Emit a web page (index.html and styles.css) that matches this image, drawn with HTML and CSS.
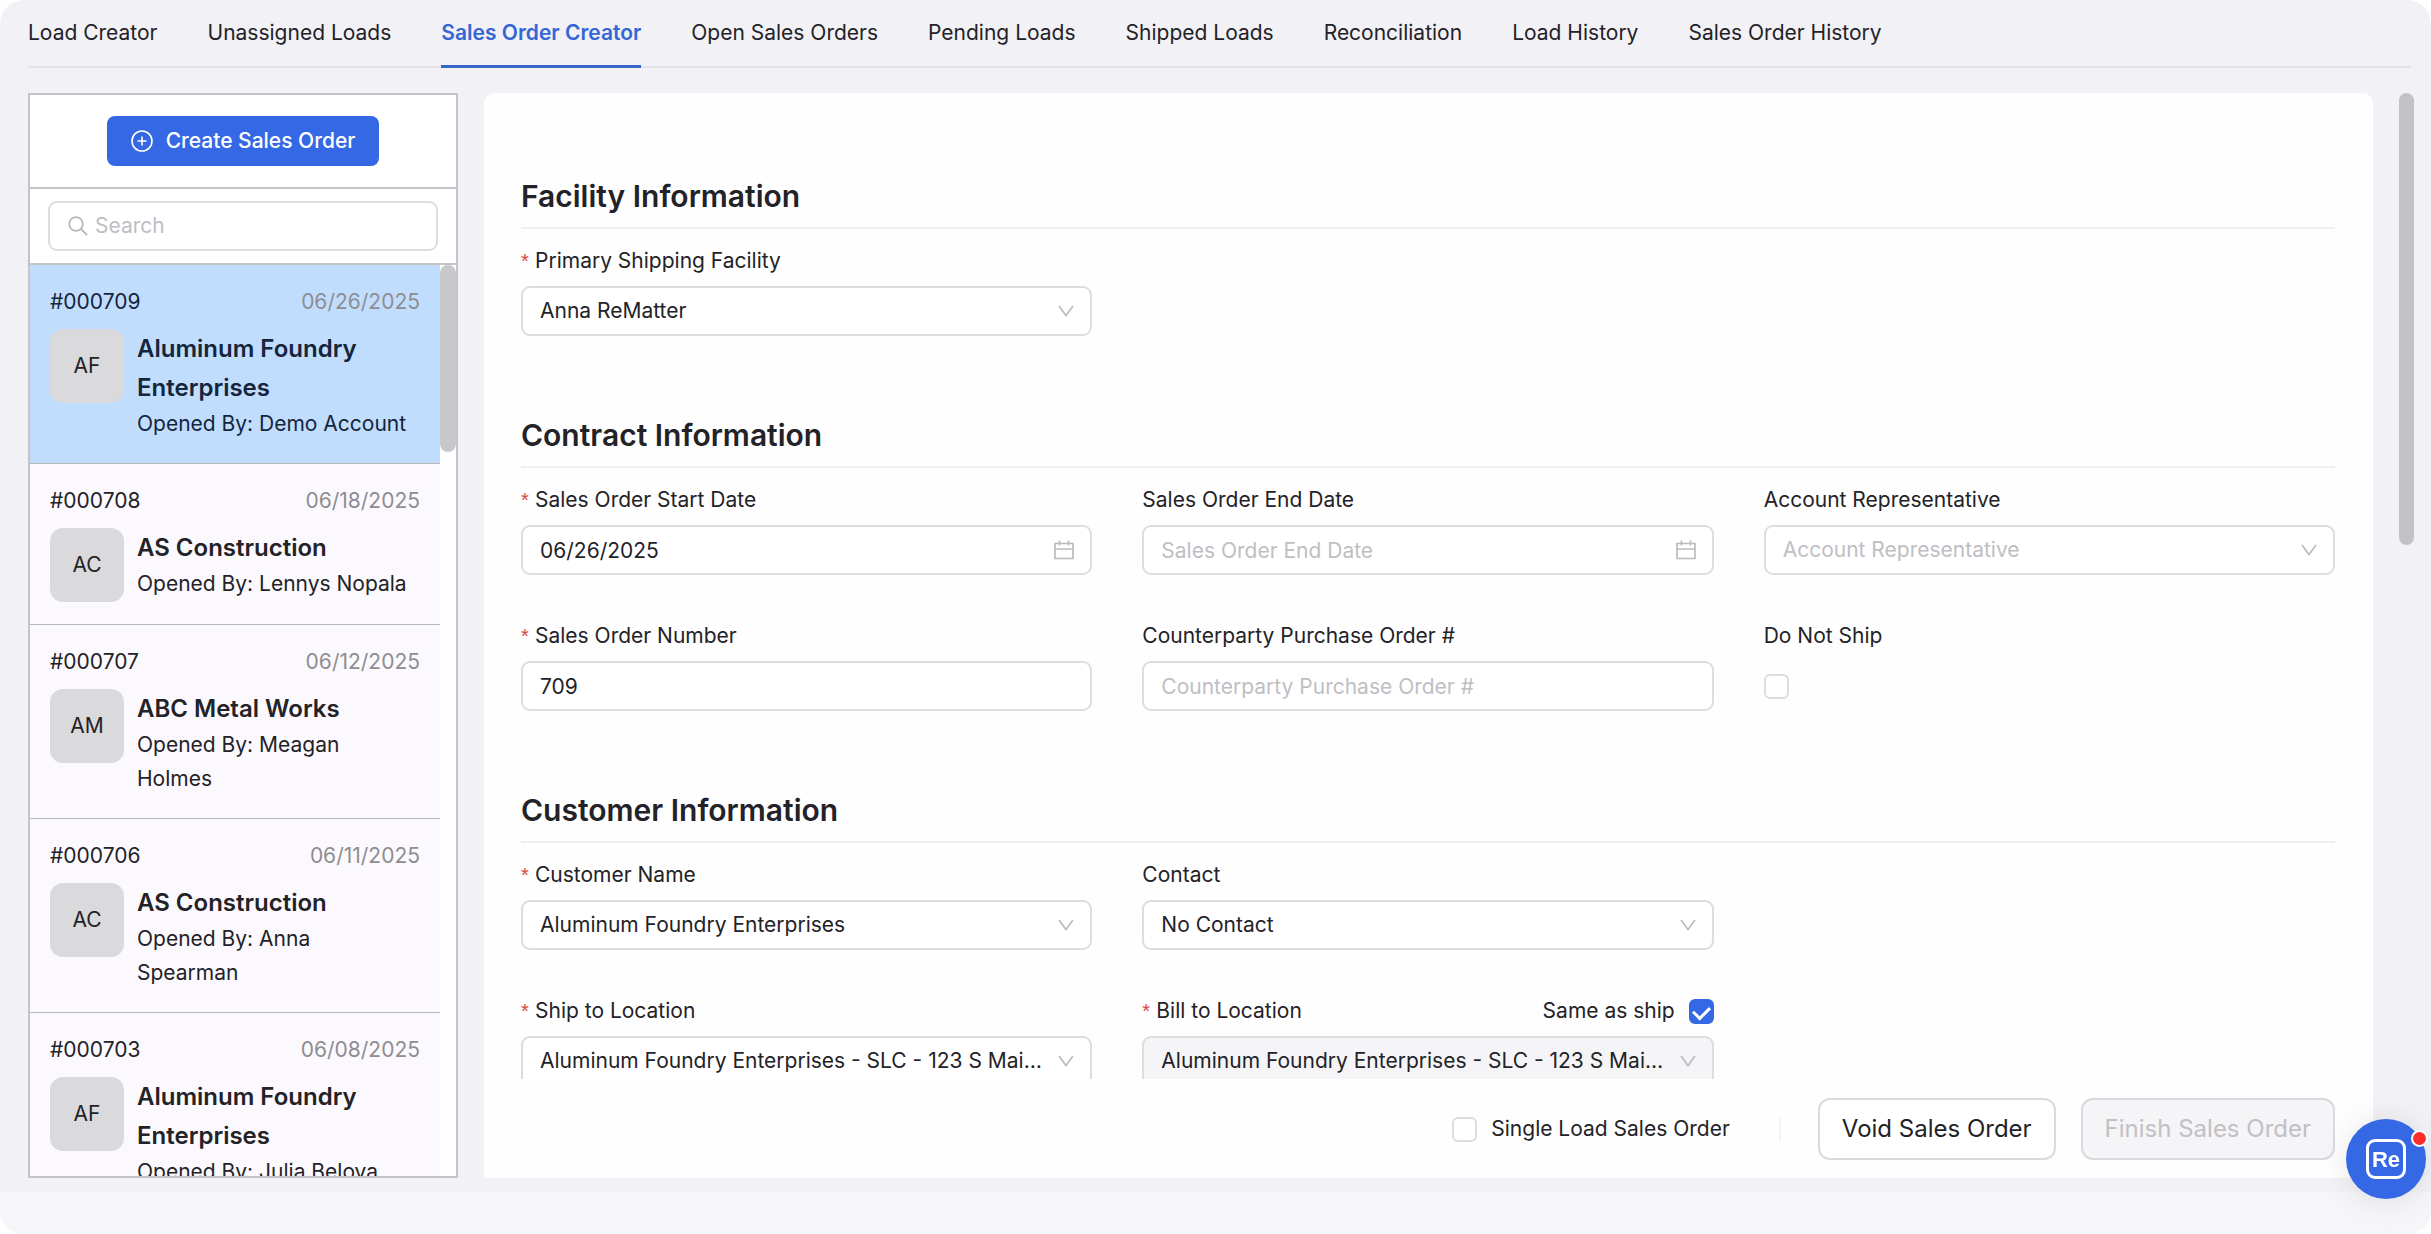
FILE: index.html
```html
<!DOCTYPE html>
<html lang="en">
<head>
  <meta charset="UTF-8">
  <title>Sales Order Creator</title>
  <link rel="stylesheet" href="styles.css">
</head>
<body>
  <div class="app">
    <nav class="tabs">
      <a href="#">Load Creator</a>
      <a href="#">Unassigned Loads</a>
      <a href="#" class="active">Sales Order Creator</a>
      <a href="#">Open Sales Orders</a>
      <a href="#">Pending Loads</a>
      <a href="#">Shipped Loads</a>
      <a href="#">Reconciliation</a>
      <a href="#">Load History</a>
      <a href="#">Sales Order History</a>
    </nav>

    <div class="content">
      <aside class="sidebar">
        <div class="create">
          <button type="button" class="create-button">
            <svg width="22" height="22" viewBox="0 0 22 22" fill="none" stroke="currentColor" stroke-width="1.6">
              <circle cx="11" cy="11" r="10"/>
              <path d="M11 6.5v9M6.5 11h9"/>
            </svg>
            Create Sales Order
          </button>
        </div>

        <div class="search">
          <label class="search-box">
            <svg width="20" height="20" viewBox="0 0 20 20" fill="none" stroke="currentColor" stroke-width="1.8">
              <circle cx="8" cy="8" r="6.8"/>
              <path d="M13 13l6 6"/>
            </svg>
            <input type="text" placeholder="Search" aria-label="Search">
          </label>
        </div>

        <div class="orders">
          <ul class="order-list">
            <li class="order selected">
              <div class="order-top"><span>#000709</span><span class="date">06/26/2025</span></div>
              <div class="order-body">
                <div class="avatar">AF</div>
                <div>
                  <div class="name">Aluminum Foundry Enterprises</div>
                  <div>Opened By: Demo Account</div>
                </div>
              </div>
            </li>
            <li class="order">
              <div class="order-top"><span>#000708</span><span class="date">06/18/2025</span></div>
              <div class="order-body">
                <div class="avatar">AC</div>
                <div>
                  <div class="name">AS Construction</div>
                  <div>Opened By: Lennys Nopala</div>
                </div>
              </div>
            </li>
            <li class="order">
              <div class="order-top"><span>#000707</span><span class="date">06/12/2025</span></div>
              <div class="order-body">
                <div class="avatar">AM</div>
                <div>
                  <div class="name">ABC Metal Works</div>
                  <div>Opened By: Meagan Holmes</div>
                </div>
              </div>
            </li>
            <li class="order">
              <div class="order-top"><span>#000706</span><span class="date">06/11/2025</span></div>
              <div class="order-body">
                <div class="avatar">AC</div>
                <div>
                  <div class="name">AS Construction</div>
                  <div>Opened By: Anna Spearman</div>
                </div>
              </div>
            </li>
            <li class="order">
              <div class="order-top"><span>#000703</span><span class="date">06/08/2025</span></div>
              <div class="order-body">
                <div class="avatar">AF</div>
                <div>
                  <div class="name">Aluminum Foundry Enterprises</div>
                  <div>Opened By: Julia Belova</div>
                </div>
              </div>
            </li>
          </ul>
          <div class="list-scroll"><div class="list-thumb"></div></div>
        </div>
      </aside>

      <form class="card">
        <div class="card-scroll">
          <section>
            <h2>Facility Information</h2>
            <div class="grid">
              <div class="field">
                <label class="required" for="facility">Primary Shipping Facility</label>
                <div class="control">
                  <select id="facility"><option>Anna ReMatter</option></select>
                  <svg class="arrow" width="16" height="12" viewBox="0 0 16 12"><path d="M1 1l7 9.5L15 1"/></svg>
                </div>
              </div>
            </div>
          </section>

          <section>
            <h2>Contract Information</h2>
            <div class="grid">
              <div class="field">
                <label class="required" for="startDate">Sales Order Start Date</label>
                <div class="control">
                  <input type="text" id="startDate" value="06/26/2025">
                  <svg class="calendar" width="20" height="20" viewBox="0 0 20 20"><path d="M1 3.5h18v15H1zM1 9h18M5.5 0.5v5M14.5 0.5v5"/></svg>
                </div>
              </div>
              <div class="field">
                <label for="endDate">Sales Order End Date</label>
                <div class="control">
                  <input type="text" id="endDate" placeholder="Sales Order End Date">
                  <svg class="calendar" width="20" height="20" viewBox="0 0 20 20"><path d="M1 3.5h18v15H1zM1 9h18M5.5 0.5v5M14.5 0.5v5"/></svg>
                </div>
              </div>
              <div class="field">
                <label for="rep">Account Representative</label>
                <div class="control">
                  <select id="rep" class="empty"><option>Account Representative</option></select>
                  <svg class="arrow" width="16" height="12" viewBox="0 0 16 12"><path d="M1 1l7 9.5L15 1"/></svg>
                </div>
              </div>
              <div class="field">
                <label class="required" for="orderNumber">Sales Order Number</label>
                <div class="control"><input type="text" id="orderNumber" value="709"></div>
              </div>
              <div class="field">
                <label for="purchaseOrder">Counterparty Purchase Order #</label>
                <div class="control"><input type="text" id="purchaseOrder" placeholder="Counterparty Purchase Order #"></div>
              </div>
              <div class="field">
                <label for="doNotShip">Do Not Ship</label>
                <div class="control"><input type="checkbox" id="doNotShip"></div>
              </div>
            </div>
          </section>

          <section>
            <h2>Customer Information</h2>
            <div class="grid">
              <div class="field">
                <label class="required" for="customer">Customer Name</label>
                <div class="control">
                  <select id="customer"><option>Aluminum Foundry Enterprises</option></select>
                  <svg class="arrow" width="16" height="12" viewBox="0 0 16 12"><path d="M1 1l7 9.5L15 1"/></svg>
                </div>
              </div>
              <div class="field">
                <label for="contact">Contact</label>
                <div class="control">
                  <select id="contact"><option>No Contact</option></select>
                  <svg class="arrow" width="16" height="12" viewBox="0 0 16 12"><path d="M1 1l7 9.5L15 1"/></svg>
                </div>
              </div>
              <div class="field first">
                <label class="required" for="shipTo">Ship to Location</label>
                <div class="control">
                  <select id="shipTo"><option>Aluminum Foundry Enterprises - SLC - 123 S Main Street</option></select>
                  <svg class="arrow" width="16" height="12" viewBox="0 0 16 12"><path d="M1 1l7 9.5L15 1"/></svg>
                </div>
              </div>
              <div class="field">
                <div class="label-row">
                  <label class="required" for="billTo">Bill to Location</label>
                  <label class="check">Same as ship <input type="checkbox" checked></label>
                </div>
                <div class="control">
                  <select id="billTo" disabled><option>Aluminum Foundry Enterprises - SLC - 123 S Main Street</option></select>
                  <svg class="arrow" width="16" height="12" viewBox="0 0 16 12"><path d="M1 1l7 9.5L15 1"/></svg>
                </div>
              </div>
            </div>
          </section>
        </div>

        <div class="card-footer">
          <label class="check"><input type="checkbox"> Single Load Sales Order</label>
          <div class="divider"></div>
          <button type="button">Void Sales Order</button>
          <button type="button" disabled>Finish Sales Order</button>
        </div>
      </form>

      <div class="page-scroll"><div class="page-thumb"></div></div>
    </div>

    <div class="bottom-strip"></div>
  </div>

  <button type="button" class="chat" aria-label="Help">
    <span class="chat-logo">Re</span>
    <span class="chat-dot"></span>
  </button>
</body>
</html>
```
FILE: styles.css
```css
* {
  box-sizing: border-box;
}

body {
  margin: 0;
  background: #ffffff;
  color: #232227;
  font-family: Inter, "Liberation Sans", sans-serif;
  font-size: 21px;
  line-height: 34px;
}

input,
select,
button {
  font: inherit;
  color: inherit;
}

.app {
  display: flex;
  flex-direction: column;
  height: 100vh;
  background: #f2f1f6;
  border-radius: 24px;
  overflow: hidden;
}

/* Tabs */
.tabs {
  display: flex;
  gap: 50px;
  margin: 0 20px 0 28px;
  padding-top: 16px;
  border-bottom: 2px solid #e3e2e8;
}

.tabs a {
  color: inherit;
  text-decoration: none;
  padding-bottom: 15px;
  margin-bottom: -2px;
  border-bottom: 3px solid transparent;
  white-space: nowrap;
}

.tabs a.active {
  color: #3566d6;
  font-weight: 600;
  border-bottom-color: #3566c8;
}

.content {
  flex: 1;
  min-height: 0;
  display: flex;
  padding: 25px 17px 14px 28px;
}

/* Sidebar */
.sidebar {
  width: 430px;
  flex-shrink: 0;
  display: flex;
  flex-direction: column;
  background: #ffffff;
  border: 2px solid #c4c3c8;
  margin-right: 26px;
}

.create {
  display: flex;
  justify-content: center;
  padding: 21px 0;
  border-bottom: 2px solid #c4c3c8;
}

.create-button {
  display: flex;
  align-items: center;
  gap: 13px;
  height: 50px;
  padding: 0 24px;
  border: none;
  border-radius: 8px;
  background: #3568e4;
  color: #ffffff;
  font-weight: 500;
  white-space: nowrap;
}

.search {
  padding: 12px 18px;
  border-bottom: 2px solid #c4c3c8;
}

.search-box {
  display: flex;
  align-items: center;
  gap: 7px;
  height: 50px;
  padding: 0 18px;
  border: 2px solid #dddce0;
  border-radius: 9px;
  color: #b9b8bd;
}

.search-box input {
  flex: 1;
  min-width: 0;
  border: none;
  outline: none;
  padding: 0;
  background: none;
}

::placeholder {
  color: #bfbec3;
  opacity: 1;
}

.orders {
  flex: 1;
  min-height: 0;
  display: flex;
}

.order-list {
  flex: 1;
  margin: 0;
  padding: 0;
  list-style: none;
  overflow: hidden;
}

.order {
  padding: 20px 20px 22px;
  background: #fbf9fd;
  border-bottom: 1px solid #b9b8bd;
}

.order.selected {
  background: #c1ddfe;
  color: #14253c;
}

.order-top {
  display: flex;
  justify-content: space-between;
  margin-bottom: 10px;
}

.date {
  color: #8e8d92;
}

.order-body {
  display: flex;
  gap: 13px;
  padding-right: 8px;
}

.avatar {
  width: 74px;
  height: 74px;
  flex-shrink: 0;
  display: flex;
  align-items: center;
  justify-content: center;
  background: #dad9dc;
  border-radius: 13px;
  color: #232227;
}

.name {
  font-size: 24px;
  font-weight: 600;
  line-height: 39px;
}

.list-scroll {
  width: 16px;
}

.list-thumb {
  height: 187px;
  background: #c8c7ca;
  border-radius: 8px;
}

/* Form card */
.card {
  flex: 1;
  min-width: 0;
  display: flex;
  flex-direction: column;
  background: #fefefe;
  border-radius: 10px 10px 0 0;
}

.card-scroll {
  flex: 1;
  min-height: 0;
  overflow: hidden;
  padding: 82px 38px 0 37px;
}

section {
  margin-bottom: 78px;
}

h2 {
  margin: 0 0 15px;
  padding-bottom: 9px;
  border-bottom: 2px solid #f0eff2;
  font-size: 30px;
  font-weight: 600;
  line-height: 43px;
}

.grid {
  display: grid;
  grid-template-columns: repeat(3, 1fr);
  gap: 44px 50px;
}

.field {
  min-width: 0;
}

.field.first {
  grid-column: 1;
}

.field > label {
  display: block;
}

.label-row {
  display: flex;
  justify-content: space-between;
}

.required::before {
  content: "*";
  display: inline-block;
  width: 14px;
  color: #d9463c;
  font-family: "Liberation Sans", sans-serif;
  font-size: 20px;
  line-height: 20px;
}

.control {
  position: relative;
  display: flex;
  align-items: center;
  height: 50px;
  margin-top: 8px;
}

.control input[type="text"],
.control select {
  width: 100%;
  height: 50px;
  padding: 0 44px 0 17px;
  border: 2px solid #dddce0;
  border-radius: 9px;
  background: #ffffff;
  appearance: none;
  outline: none;
  text-overflow: ellipsis;
}

.control select.empty {
  color: #bfbec3;
}

.control select:disabled {
  background: #f5f4f7;
  color: #232227;
  opacity: 1;
}

.arrow,
.calendar {
  position: absolute;
  right: 18px;
  fill: none;
  stroke: #bcbbc0;
  stroke-width: 1.7;
  pointer-events: none;
}

input[type="checkbox"] {
  appearance: none;
  flex-shrink: 0;
  width: 25px;
  height: 25px;
  margin: 0;
  border: 2px solid #dddce0;
  border-radius: 6px;
  background: #ffffff;
  display: flex;
  justify-content: center;
}

input[type="checkbox"]:checked {
  background: #3568e4;
  border-color: #3568e4;
}

input[type="checkbox"]:checked::after {
  content: "";
  width: 8px;
  height: 13px;
  margin-top: 2px;
  border: solid #ffffff;
  border-width: 0 3px 3px 0;
  transform: rotate(45deg);
}

.check {
  display: flex;
  align-items: center;
  gap: 14px;
}

.card-footer {
  display: flex;
  align-items: center;
  justify-content: flex-end;
  gap: 25px;
  padding: 19px 38px 18px 37px;
}

.divider {
  width: 2px;
  height: 22px;
  margin: 0 12px 0 24px;
  background: #f3f2f5;
}

.card-footer button {
  height: 62px;
  padding: 0 22px;
  border: 2px solid #dad9dd;
  border-radius: 12px;
  background: #ffffff;
  font-size: 24px;
  white-space: nowrap;
}

.card-footer button:disabled {
  background: #f5f4f7;
  color: #c1c0c5;
}

.page-scroll {
  width: 15px;
  margin-left: 26px;
}

.page-thumb {
  height: 452px;
  background: #c2c1c5;
  border-radius: 8px;
}

.bottom-strip {
  height: 42px;
  background: #f6f5f9;
}

/* Floating help button */
.chat {
  position: fixed;
  right: 5px;
  bottom: 35px;
  width: 80px;
  height: 80px;
  display: flex;
  align-items: center;
  justify-content: center;
  padding: 0;
  border: none;
  border-radius: 50%;
  background: #3568e4;
  box-shadow: 0 2px 30px rgba(0, 0, 0, 0.1);
}

.chat-logo {
  width: 40px;
  height: 40px;
  border: 3px solid #ffffff;
  border-radius: 9px;
  color: #ffffff;
  font-family: "Liberation Sans", sans-serif;
  font-size: 22px;
  font-weight: 700;
  line-height: 36px;
}

.chat-dot {
  position: absolute;
  top: 11px;
  right: -2px;
  width: 17px;
  height: 17px;
  border: 2px solid #ffffff;
  border-radius: 50%;
  background: #fb2f2b;
}
```
